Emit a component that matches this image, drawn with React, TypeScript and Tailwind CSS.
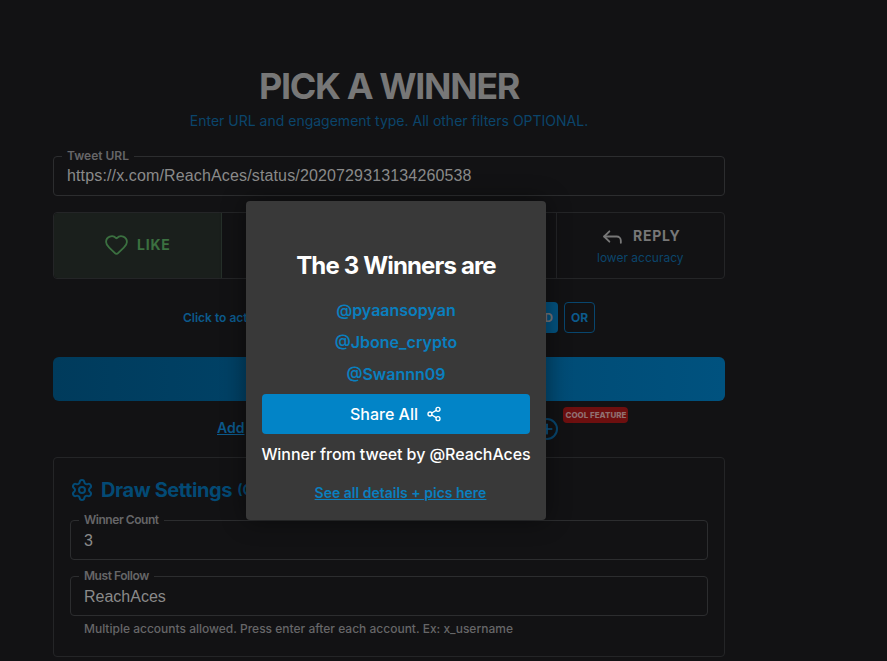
import React from 'react';
import { Heart, Reply, Share2, Plus, Settings } from 'lucide-react';

const inter = "font-['Inter',sans-serif]";

const Field: React.FC<{ label: string; value: string; className?: string; labelClass?: string; inputClass?: string }> = ({
  label,
  value,
  className,
  labelClass,
  inputClass,
}) => (
  <fieldset className={`border border-[#2c2d2f] rounded h-[48px] px-[13px] ${className ?? ''}`}>
    <legend className={`ml-[-5px] px-[5px] text-xs leading-4 font-semibold text-[#666668] ${labelClass ?? ''}`}>{label}</legend>
    <input
      readOnly
      value={value}
      className={`block w-full bg-transparent outline-none text-base leading-6 text-[#8a8a8a] font-['Liberation_Sans',sans-serif] ${inputClass ?? ''}`}
    />
  </fieldset>
);

const winners = ['@pyaansopyan', '@Jbone_crypto', '@Swannn09'];

export default function App() {
  return (
    <div className={`relative h-[661px] overflow-hidden bg-[#121214] ${inter}`}>
      <div className="ml-[53px] w-[672px] pt-[64px]">
        <h1 className="text-4xl leading-[44px] font-bold tracking-[-1.35px] text-center text-[#777777]">PICK A WINNER</h1>
        <p className="text-sm leading-5 text-center text-[#0b456b] mt-[3px]">Enter URL and engagement type. All other filters OPTIONAL.</p>

        <Field label="Tweet URL" value="https://x.com/ReachAces/status/2020729313134260538" className="mt-[17px]" inputClass="tracking-[0.14px]" />

        <div className="mt-[16px] h-[67px] grid grid-cols-4 border border-[#242527] rounded">
          <div className="flex items-center justify-center gap-2 pb-[2px] bg-[#1a1f1c] border-r border-[#26302a] rounded-l">
            <Heart size={25} strokeWidth={1.75} className="text-[#3b7040]" />
            <span className="text-sm font-bold tracking-[0.8px] text-[#3b7040]">LIKE</span>
          </div>
          <div className="border-r border-[#242527]" />
          <div className="border-r border-[#242527]" />
          <div className="flex flex-col items-center justify-center pb-[2px]">
            <div className="flex items-center gap-2">
              <Reply size={25} strokeWidth={1.75} className="text-[#777777]" />
              <span className="text-sm font-bold tracking-[0.8px] text-[#777777]">REPLY</span>
            </div>
            <span className="text-xs leading-4 text-[#0b456b] mt-[1px]">lower accuracy</span>
          </div>
        </div>

        <div className="mt-[23px] h-[31px] flex items-center pl-[130px] gap-1.5">
          <span className="text-xs font-semibold text-[#0c5a8c] w-[340px]">Click to activate filters</span>
          <div className="ml-[-8px] w-[37px] h-[31px] rounded bg-[#03527f] flex items-center justify-center text-xs font-bold text-[#777777]">AND</div>
          <div className="w-[31px] h-[31px] rounded border border-[#08466e] flex items-center justify-center text-xs font-bold text-[#0c5a8c]">OR</div>
        </div>

        <div className="mt-[24px] h-[44px] rounded-md bg-gradient-to-r from-[#003b5c] to-[#00527f]" />

        <div className="mt-[5px] h-[51px] flex items-start pl-[164px]">
          <a className="mt-[12px] text-sm font-semibold underline text-[#0c5a8c]">Add</a>
          <span className="ml-[292px] mt-[12px] w-[22px] h-[22px] rounded-full border-2 border-[#08466e] flex items-center justify-center text-[#0c5a8c]">
            <Plus size={16} strokeWidth={2.5} />
          </span>
          <span className="ml-[5px] mt-[1px] px-[2px] h-[16px] rounded-sm bg-[#6d0f0f] text-[8px] leading-4 font-extrabold text-[#907070] whitespace-nowrap">COOL FEATURE</span>
        </div>

        <div className="h-[200px] border border-[#242527] rounded px-4 pt-[19px]">
          <div className="flex items-center gap-[7px] h-[26px]">
            <Settings size={24} strokeWidth={2} className="text-[#034a75]" />
            <span className="text-xl font-bold tracking-[-0.4px] text-[#034a75]">Draw Settings</span>
            <span className="text-sm font-bold text-[#034a75] ml-[-2px]">(Optional)</span>
          </div>
          <Field label="Winner Count" value="3" className="mt-[9px]" labelClass="tracking-[-0.45px]" inputClass="mt-[1px]" />
          <Field label="Must Follow" value="ReachAces" className="mt-[8px]" labelClass="tracking-[-0.45px]" inputClass="mt-[1px]" />
          <p className="text-xs leading-4 font-medium text-[#666668] mt-[5px] pl-[14px]">Multiple accounts allowed. Press enter after each account. Ex: x_username</p>
        </div>
      </div>

      <div className="absolute left-[246px] top-[201px] w-[300px] h-[319px] rounded bg-[#393939] shadow-[0_0_24px_rgba(0,0,0,0.45)] px-4 pt-[49px] flex flex-col items-center">
        <h2 className="text-2xl leading-8 font-bold tracking-[-0.85px] text-white">The 3 Winners are</h2>
        <div className="mt-[16px] flex flex-col items-center gap-2">
          {winners.map((w) => (
            <span key={w} className="text-base leading-6 font-semibold text-[#0a7fbf]">{w}</span>
          ))}
        </div>
        <button className="mt-[8px] w-full h-[40px] rounded bg-[#0284c7] flex items-center justify-center gap-2 text-base font-medium text-white">
          Share All <Share2 size={16} />
        </button>
        <p className="mt-[8px] text-base leading-6 font-medium tracking-[-0.07px] text-white whitespace-nowrap">Winner from tweet by @ReachAces</p>
        <a className="mt-[17px] ml-[9px] text-sm leading-5 font-semibold underline text-[#0a7fbf]">See all details + pics here</a>
      </div>
    </div>
  );
}
